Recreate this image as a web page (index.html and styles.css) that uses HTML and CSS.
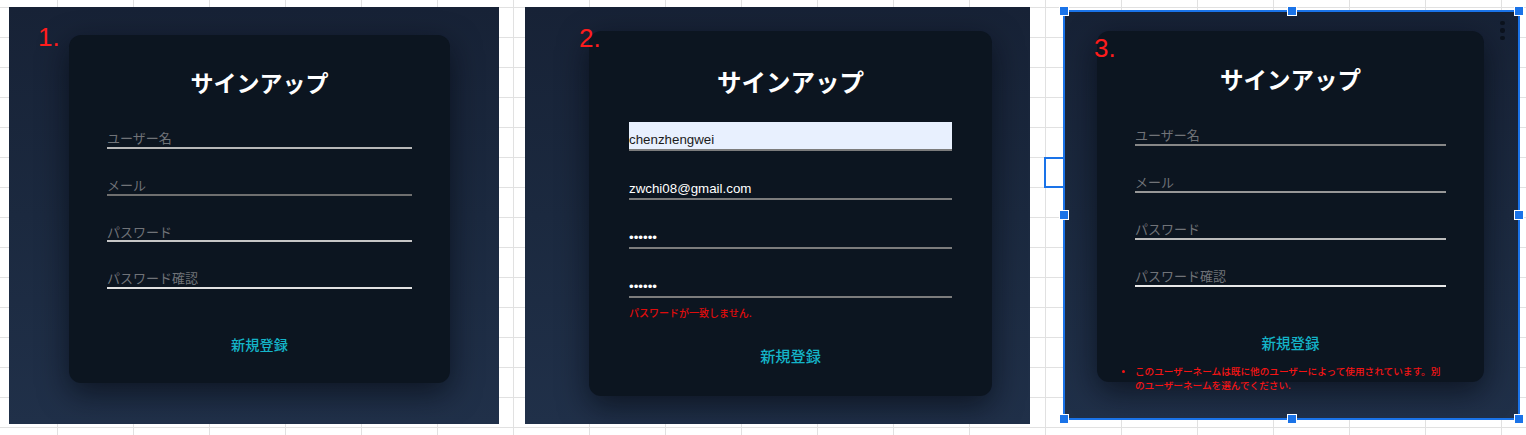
FILE: index.html
```html
<!DOCTYPE html>
<html lang="ja">
<head>
<meta charset="utf-8">
<title>サインアップ</title>
<link rel="stylesheet" href="styles.css">
</head>
<body>
<div class="sheet">
  <div class="cell-cursor"></div>

  <section class="shot shot-1">
    <span class="step">1.</span>
    <div class="card">
      <h1 class="title">サインアップ</h1>
      <form class="form">
        <label class="field"><input type="text" placeholder="ユーザー名"></label>
        <label class="field"><input type="email" placeholder="メール"></label>
        <label class="field"><input type="password" placeholder="パスワード"></label>
        <label class="field"><input type="password" placeholder="パスワード確認"></label>
      </form>
      <div class="submit">新規登録</div>
    </div>
  </section>

  <section class="shot shot-2">
    <span class="step">2.</span>
    <div class="card">
      <h1 class="title">サインアップ</h1>
      <form class="form">
        <label class="field field-autofill"><input type="text" value="chenzhengwei"></label>
        <label class="field"><input type="email" value="zwchi08@gmail.com"></label>
        <label class="field"><input type="password" value="abcdef"></label>
        <label class="field"><input type="password" value="abcdeg"></label>
      </form>
      <p class="error">パスワードが一致しません.</p>
      <div class="submit">新規登録</div>
    </div>
  </section>

  <section class="shot shot-3">
    <span class="step">3.</span>
    <div class="more"><span></span><span></span><span></span></div>
    <div class="card">
      <h1 class="title">サインアップ</h1>
      <form class="form">
        <label class="field"><input type="text" placeholder="ユーザー名"></label>
        <label class="field"><input type="email" placeholder="メール"></label>
        <label class="field"><input type="password" placeholder="パスワード"></label>
        <label class="field"><input type="password" placeholder="パスワード確認"></label>
      </form>
      <div class="submit">新規登録</div>
      <ul class="error-list">
        <li><span class="dot"></span><span class="msg">このユーザーネームは既に他のユーザーによって使用されています。別のユーザーネームを選んでください.</span></li>
      </ul>
    </div>
  </section>

  <div class="selection">
    <span class="handle h-tl"></span>
    <span class="handle h-tm"></span>
    <span class="handle h-tr"></span>
    <span class="handle h-ml"></span>
    <span class="handle h-mr"></span>
    <span class="handle h-bl"></span>
    <span class="handle h-bm"></span>
    <span class="handle h-br"></span>
  </div>
</div>
</body>
</html>
```

FILE: styles.css
```css
html, body {
  margin: 0;
  padding: 0;
}

body {
  width: 1526px;
  height: 435px;
  overflow: hidden;
  background-color: #ffffff;
  background-image:
    linear-gradient(to right, #e1e1e1 1px, transparent 1px),
    linear-gradient(to bottom, #e1e1e1 1px, transparent 1px);
  background-size: 76px 30px;
  background-position: 57px 7px;
  font-family: "Noto Sans CJK JP", "Noto Sans", sans-serif;
}

.sheet {
  position: relative;
  width: 1526px;
  height: 435px;
}

/* spreadsheet cell cursor, partly covered by the selected picture */
.cell-cursor {
  position: absolute;
  left: 1044px;
  top: 157px;
  width: 60px;
  height: 31px;
  border: 2px solid #1a73e8;
  box-sizing: border-box;
}

/* pasted screenshots */
.shot {
  position: absolute;
  box-sizing: border-box;
  overflow: hidden;
  background: linear-gradient(to bottom, #172236 0%, #1b293f 50%, #203049 100%);
}

.shot-1 {
  left: 9px;
  top: 7px;
  width: 490px;
  height: 417px;
  padding: 28px 0 0 60px;
}

.shot-2 {
  left: 525px;
  top: 7px;
  width: 505px;
  height: 417px;
  padding: 24px 0 0 64px;
}

.shot-3 {
  left: 1065px;
  top: 12px;
  width: 453px;
  height: 406px;
  padding: 19px 0 0 32px;
}

.step {
  position: absolute;
  z-index: 2;
  color: #ff1c1c;
  font-family: "Liberation Sans", Arial, sans-serif;
  font-size: 26px;
  line-height: 26px;
}

.shot-1 .step { left: 29px; top: 17px; }
.shot-2 .step { left: 54px; top: 18px; }
.shot-3 .step { left: 29px; top: 23px; }

.more {
  position: absolute;
  left: 435px;
  top: 8.5px;
  display: flex;
  flex-direction: column;
  gap: 3px;
}

.more span {
  width: 4.6px;
  height: 4.6px;
  border-radius: 50%;
  background: #0b121d;
}

/* sign-up card */
.card {
  box-sizing: border-box;
  display: flex;
  flex-direction: column;
  background: #0c1520;
  border-radius: 12px;
  box-shadow: 0 10px 30px rgba(3, 7, 14, 0.6);
}

.shot-1 .card { width: 381px; height: 348px; padding: 33px 38px 0; }
.shot-2 .card { width: 403px; height: 365px; padding: 36px 40px 0; }
.shot-3 .card { width: 387px; height: 351px; padding: 34px 38px 0; }

.title {
  margin: 0;
  text-align: center;
  color: #ffffff;
  font-weight: 700;
  font-size: 23px;
  line-height: 28px;
}

.shot-2 .title { font-size: 24.5px; line-height: 30px; }
.shot-3 .title { font-size: 23.5px; }

.form {
  display: flex;
  flex-direction: column;
  margin: 21px 0 0;
  gap: 14.7px;
}

.shot-2 .form { margin-top: 25px; gap: 20px; }
.shot-3 .form { margin-top: 20.7px; gap: 15px; }

.field {
  display: flex;
  align-items: flex-end;
  box-sizing: border-box;
  height: 32px;
  border-bottom: 2px solid #9a9a9a;
}

.shot-2 .field { height: 29px; border-bottom-color: #7c7c7c; }

.shot-1 .field:nth-child(1) { border-bottom-color: #b8b8b8; }
.shot-1 .field:nth-child(2) { border-bottom-color: #6f6f6f; }
.shot-1 .field:nth-child(3) { border-bottom-color: #c6c6c6; }
.shot-1 .field:nth-child(4) { border-bottom-color: #e2e2e2; }

.shot-3 .field:nth-child(1) { border-bottom-color: #878787; }
.shot-3 .field:nth-child(2) { border-bottom-color: #979797; }
.shot-3 .field:nth-child(3) { border-bottom-color: #bcbcbc; }
.shot-3 .field:nth-child(4) { border-bottom-color: #e8e8e8; }

.field input {
  display: block;
  width: 100%;
  margin: 0;
  padding: 0 0 1px;
  border: 0;
  outline: none;
  background: transparent;
  color: #ffffff;
  font-family: "Noto Sans CJK JP", "Noto Sans", sans-serif;
  font-size: 13px;
  line-height: 15.6px;
}

.field input::placeholder {
  color: #707378;
  opacity: 1;
}

.shot-2 .field input {
  font-family: "Liberation Sans", Arial, sans-serif;
  font-size: 13.33px;
  line-height: 15px;
  padding-bottom: 2px;
}

.field-autofill {
  background: #e8f0fe;
}

.shot-2 .field-autofill input {
  color: #1b1b1b;
}

.submit {
  text-align: center;
  color: #14b4c8;
  font-weight: 500;
  font-size: 14.2px;
  line-height: 20px;
  margin-top: 45px;
}

.shot-2 .submit { font-size: 15.2px; margin-top: 25px; }
.shot-3 .submit { font-size: 14.5px; margin-top: 46px; }

.error {
  margin: 8px 0 0;
  color: #e00c0c;
  font-weight: 500;
  font-size: 10px;
  line-height: 14px;
}

.error-list {
  margin: 11px -2px 0 -13px;
  padding: 0;
  list-style: none;
  color: #f51414;
  font-weight: 500;
  font-size: 9.65px;
  line-height: 14.5px;
}

.error-list li {
  display: flex;
  align-items: flex-start;
  gap: 10px;
}

.error-list .dot {
  flex: none;
  width: 3px;
  height: 3px;
  margin-top: 6px;
  border-radius: 50%;
  background: #f51414;
}

.error-list .msg {
  flex: 1;
}

/* picture selection frame */
.selection {
  position: absolute;
  z-index: 3;
  left: 1063px;
  top: 10px;
  width: 457px;
  height: 410px;
  box-sizing: border-box;
  border: 2px solid #1a73e8;
}

.handle {
  position: absolute;
  width: 10px;
  height: 10px;
  box-sizing: border-box;
  background: #1a73e8;
  border: 1px solid #ffffff;
  transform: translate(-50%, -50%);
}

.h-tl { left: -1px; top: -1px; }
.h-tm { left: 50%; top: -1px; }
.h-tr { left: calc(100% + 1px); top: -1px; }
.h-ml { left: -1px; top: 50%; }
.h-mr { left: calc(100% + 1px); top: 50%; }
.h-bl { left: -1px; top: calc(100% + 1px); }
.h-bm { left: 50%; top: calc(100% + 1px); }
.h-br { left: calc(100% + 1px); top: calc(100% + 1px); }
```
